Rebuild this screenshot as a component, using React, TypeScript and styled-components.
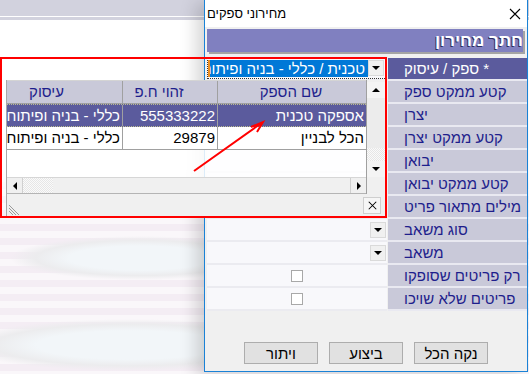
import React from 'react';
import styled, { createGlobalStyle } from 'styled-components';

const FONT = `"Liberation Sans", "DejaVu Sans", sans-serif`;

const GlobalStyle = createGlobalStyle`
  html, body {
    margin: 0;
    padding: 0;
  }
  body {
    width: 529px;
    height: 374px;
    overflow: hidden;
    font-family: ${FONT};
  }
`;

const Desktop = styled.div`
  position: relative;
  width: 529px;
  height: 374px;
  overflow: hidden;
  background:
    linear-gradient(to bottom, #d2d2de 0 16px, #fff 16px 17px, #d2d2de 17px 20px, transparent 20px),
    linear-gradient(to bottom, #fff 0 170px, rgba(255, 255, 255, 0) 222px),
    radial-gradient(ellipse 130px 22px at 140px 258px, #f2f6f9 55%, #ececee 80%, rgba(236, 236, 238, 0) 100%),
    radial-gradient(ellipse 170px 26px at 130px 345px, #f2f6f9 55%, #ececee 80%, rgba(236, 236, 238, 0) 100%),
    repeating-linear-gradient(to bottom, #f4edf4 0 7px, #faf7fa 7px 14px);
`;

/* ---------- dialog window ---------- */

const Dialog = styled.div`
  position: absolute;
  left: 204px;
  top: -1px;
  width: 324px;
  height: 373px;
  box-sizing: border-box;
  border: 1px solid #1a82d6;
  background: #f0f0f0;
  box-shadow: -8px 4px 16px rgba(0, 0, 0, 0.16);
  display: flex;
  flex-direction: column;
  z-index: 1;
`;

const TitleBar = styled.div`
  height: 27px;
  flex-shrink: 0;
  background: #fff;
  display: flex;
  align-items: center;
  justify-content: space-between;
  padding: 0 6px 0 2px;
`;

const TitleText = styled.span`
  direction: rtl;
  font-size: 13px;
  color: #000;
`;

const Body = styled.div`
  flex: 1;
  display: flex;
  flex-direction: column;
  padding: 2px 0 0 2px;
`;

const SectionBar = styled.div`
  width: 316px;
  height: 23px;
  flex-shrink: 0;
  background: #8080c0;
  box-shadow: 2px 2px 0 #a4a4a4;
  direction: rtl;
  text-align: right;
  overflow: hidden;
  white-space: nowrap;
  font-size: 17px;
  font-weight: bold;
  line-height: 23px;
  color: #fff;
  text-shadow: -1px 1px 0 #2c2c60;
`;

const Form = styled.div`
  margin-top: 6px;
  display: flex;
  flex-direction: column;
`;

const FormRow = styled.div`
  display: grid;
  grid-template-columns: 180px 139px;
  column-gap: 1px;
  height: 23px;
`;

const InputCell = styled.div<{ $align?: string }>`
  box-sizing: border-box;
  background: #f8f8fb;
  border-bottom: 2px solid #ebebf0;
  display: flex;
  align-items: center;
  justify-content: ${(p) => p.$align || 'flex-end'};
`;

const LabelCell = styled.div<{ $active?: boolean }>`
  box-sizing: border-box;
  background: ${(p) => (p.$active ? '#5b5b9d' : '#c9c9d9')};
  color: ${(p) => (p.$active ? '#fff' : '#1e1e8c')};
  border-bottom: 2px solid #e9e9f1;
  direction: rtl;
  text-align: left;
  padding-left: 16px;
  font-size: 15px;
  line-height: 21px;
  white-space: nowrap;
  overflow: hidden;
`;

const ComboFocus = styled.div`
  box-sizing: border-box;
  width: 100%;
  height: 21px;
  border: 1px dotted #333;
  display: flex;
  align-items: stretch;
  padding: 1px 1px 1px 0;
`;

const ComboSelection = styled.div`
  flex: 1;
  min-width: 0;
  background: #0078d7;
  color: #fff;
  border-left: 2px solid #f09020;
  direction: rtl;
  text-align: right;
  white-space: nowrap;
  overflow: hidden;
  font-size: 15px;
  line-height: 17px;
  padding-right: 3px;
`;

const DropButton = styled.div`
  width: 16px;
  height: 16px;
  flex-shrink: 0;
  box-sizing: border-box;
  background: #f0f0f0;
  border: 1px solid #dadada;
  display: flex;
  align-items: center;
  justify-content: center;
  margin-right: 1px;
`;

const Triangle = styled.span<{ $dir: 'up' | 'down' | 'left' | 'right' }>`
  width: 0;
  height: 0;
  border-style: solid;
  ${(p) =>
    p.$dir === 'down'
      ? 'border-width: 4px 4px 0 4px; border-color: #000 transparent transparent transparent;'
      : p.$dir === 'up'
      ? 'border-width: 0 4px 4px 4px; border-color: transparent transparent #000 transparent;'
      : p.$dir === 'left'
      ? 'border-width: 4px 4px 4px 0; border-color: transparent #000 transparent transparent;'
      : 'border-width: 4px 0 4px 4px; border-color: transparent transparent transparent #000;'}
`;

const CheckBox = styled.span`
  width: 12px;
  height: 12px;
  box-sizing: border-box;
  background: #fff;
  border: 1px solid #a8a8a8;
`;

const Footer = styled.div`
  flex: 1;
  display: flex;
  direction: rtl;
  justify-content: center;
  align-items: flex-start;
  gap: 11px;
  padding-top: 31px;
  padding-right: 2px;
`;

const PushButton = styled.button`
  width: 74px;
  height: 22px;
  box-sizing: border-box;
  background: #e1e1e1;
  border: 1px solid #adadad;
  font-family: ${FONT};
  font-size: 15px;
  color: #000;
  padding: 0;
  direction: rtl;
`;

/* ---------- popup grid (outlined in red) ---------- */

const Popup = styled.div`
  position: absolute;
  left: 0;
  top: 57px;
  width: 387px;
  height: 161px;
  box-sizing: border-box;
  border: 2px solid #ff0000;
  display: flex;
  flex-direction: column;
  z-index: 2;
`;

const PopupGap = styled.div`
  height: 21px;
  flex-shrink: 0;
`;

const Panel = styled.div`
  flex: 1;
  margin-left: 4px;
  border-left: 1px solid #a8a8a8;
  display: flex;
  flex-direction: column;
  font-size: 15px;
`;

const GridArea = styled.div`
  height: 114px;
  display: flex;
`;

const GridBody = styled.div`
  width: 360px;
  box-sizing: border-box;
  border-right: 1px solid #a0a0a0;
  display: flex;
  flex-direction: column;
  overflow: hidden;
`;

const GridRow = styled.div<{ $kind: 'head' | 'selected' | 'plain' }>`
  display: flex;
  direction: rtl;
  flex-shrink: 0;
  box-sizing: border-box;
  height: ${(p) => (p.$kind === 'head' ? 24 : 23)}px;
  background: ${(p) => (p.$kind === 'head' ? '#c9c9d9' : p.$kind === 'selected' ? '#5b5b9d' : '#fff')};
  color: ${(p) => (p.$kind === 'head' ? '#1e1e8c' : p.$kind === 'selected' ? '#fff' : '#000')};
  border-top: ${(p) => (p.$kind === 'head' ? '1px solid #d4d4d4' : p.$kind === 'selected' ? '1px dotted #bcbc90' : 'none')};
  border-bottom: ${(p) => (p.$kind === 'selected' ? '1px dotted #bcbc90' : '1px solid #a0a0a0')};
  line-height: 21px;
`;

const GridCell = styled.div<{ $w: number; $center?: boolean; $shift?: number }>`
  width: ${(p) => p.$w}px;
  flex-shrink: 0;
  box-sizing: border-box;
  border-left: 1px solid #a0a0a0;
  text-align: ${(p) => (p.$center ? 'center' : 'right')};
  padding-right: ${(p) => p.$shift ?? 2}px;
  white-space: nowrap;
  overflow: hidden;
`;

const GridEmpty = styled.div`
  flex: 1;
  background: rgba(255, 255, 255, 0.85);
`;

const HScroll = styled.div`
  height: 17px;
  flex-shrink: 0;
  box-sizing: border-box;
  display: flex;
  background: #f0f0f0;
  border-top: 1px solid #d6d6d6;
  border-bottom: 1px solid #b4b4b4;
`;

const ScrollButton = styled.div<{ $edge?: 'left' | 'right' }>`
  width: 16px;
  flex-shrink: 0;
  box-sizing: border-box;
  background: #f0f0f0;
  display: flex;
  align-items: center;
  justify-content: center;
  ${(p) => (p.$edge === 'left' ? 'border-right: 1px solid #d0d0d0;' : '')}
  ${(p) => (p.$edge === 'right' ? 'border-left: 1px solid #d0d0d0;' : '')}
`;

const Checker = styled.div<{ $size?: number }>`
  ${(p) => (p.$size ? `width: ${p.$size}px; flex-shrink: 0;` : 'flex: 1;')}
  background: repeating-conic-gradient(#e6e6e6 0 25%, #fafafa 0 50%) 0 0 / 2px 2px;
`;

const Filler = styled.div`
  flex: 1;
`;

const VScroll = styled.div`
  width: 18px;
  flex-shrink: 0;
  display: flex;
  flex-direction: column;
  background: #f0f0f0;
  padding-top: 2px;
`;

const VButton = styled.div`
  height: 16px;
  flex-shrink: 0;
  background: #f4f4f4;
  display: flex;
  align-items: center;
  justify-content: center;
`;

const VThumb = styled.div`
  height: 50px;
  flex-shrink: 0;
  background: #ececec;
`;

const Corner = styled.div`
  height: 17px;
  flex-shrink: 0;
  background: #f0f0f0;
`;

const BottomStrip = styled.div`
  flex: 1;
  background: #f0f0f0;
  display: flex;
  justify-content: space-between;
  align-items: center;
  padding: 0 4px 0 1px;
`;

const Grip = styled.svg`
  align-self: flex-end;
`;

const CloseBox = styled.div`
  width: 18px;
  height: 17px;
  box-sizing: border-box;
  background: #f6f6f6;
  border: 1px solid #cfcfcf;
  display: flex;
  align-items: center;
  justify-content: center;
`;

const Annotation = styled.svg`
  position: absolute;
  left: 0;
  top: 0;
  z-index: 3;
  pointer-events: none;
`;

type Field = { label: string; kind?: 'combo' | 'drop' | 'check'; active?: boolean };

const fields: Field[] = [
  { label: '* ספק / עיסוק', kind: 'combo', active: true },
  { label: 'קטע ממקט ספק' },
  { label: 'יצרן' },
  { label: 'קטע ממקט יצרן' },
  { label: 'יבואן' },
  { label: 'קטע ממקט יבואן' },
  { label: 'מילים מתאור פריט' },
  { label: 'סוג משאב', kind: 'drop' },
  { label: 'משאב', kind: 'drop' },
  { label: 'רק פריטים שסופקו', kind: 'check' },
  { label: 'פריטים שלא שויכו', kind: 'check' },
];

const suppliers = [
  { name: 'אספקה טכנית', id: '555333222', biz: 'כללי - בניה ופיתוח' },
  { name: 'הכל לבניין', id: '29879', biz: 'כללי - בניה ופיתוח' },
];

const CloseIcon = ({ size, width }: { size: number; width: number }) => (
  <svg width={size} height={size} viewBox="0 0 12 12">
    <path d="M1 1 L11 11 M11 1 L1 11" stroke="#000" strokeWidth={width} fill="none" />
  </svg>
);

const renderInput = (f: Field) => {
  if (f.kind === 'combo') {
    return (
      <InputCell>
        <ComboFocus>
          <ComboSelection>טכנית / כללי - בניה ופיתוח</ComboSelection>
          <DropButton>
            <Triangle $dir="down" />
          </DropButton>
        </ComboFocus>
      </InputCell>
    );
  }
  if (f.kind === 'drop') {
    return (
      <InputCell>
        <DropButton>
          <Triangle $dir="down" />
        </DropButton>
      </InputCell>
    );
  }
  if (f.kind === 'check') {
    return (
      <InputCell $align="center">
        <CheckBox />
      </InputCell>
    );
  }
  return <InputCell />;
};

const App: React.FC = () => {
  return (
    <Desktop>
      <GlobalStyle />

      <Dialog>
        <TitleBar>
          <TitleText>מחירוני ספקים</TitleText>
          <CloseIcon size={12} width={1.1} />
        </TitleBar>
        <Body>
          <SectionBar>חתך מחירון</SectionBar>
          <Form>
            {fields.map((f) => (
              <FormRow key={f.label}>
                {renderInput(f)}
                <LabelCell $active={f.active}>{f.label}</LabelCell>
              </FormRow>
            ))}
          </Form>
          <Footer>
            <PushButton>נקה הכל</PushButton>
            <PushButton>ביצוע</PushButton>
            <PushButton>ויתור</PushButton>
          </Footer>
        </Body>
      </Dialog>

      <Popup>
        <PopupGap />
        <Panel>
          <GridArea>
            <GridBody>
              <GridRow $kind="head">
                <GridCell $w={149} $center>שם הספק</GridCell>
                <GridCell $w={95} $center $shift={22}>זהוי ח.פ</GridCell>
                <GridCell $w={150} $center>עיסוק</GridCell>
              </GridRow>
              {suppliers.map((s, i) => (
                <GridRow key={s.id} $kind={i === 0 ? 'selected' : 'plain'}>
                  <GridCell $w={149}>{s.name}</GridCell>
                  <GridCell $w={95}>{s.id}</GridCell>
                  <GridCell $w={150}>{s.biz}</GridCell>
                </GridRow>
              ))}
              <GridEmpty />
              <HScroll>
                <ScrollButton $edge="left">
                  <Triangle $dir="left" />
                </ScrollButton>
                <Checker $size={30} />
                <Filler />
                <ScrollButton $edge="right">
                  <Triangle $dir="right" />
                </ScrollButton>
              </HScroll>
            </GridBody>
            <VScroll>
              <VButton>
                <Triangle $dir="up" />
              </VButton>
              <VThumb />
              <Checker />
              <VButton>
                <Triangle $dir="down" />
              </VButton>
              <Corner />
            </VScroll>
          </GridArea>
          <BottomStrip>
            <Grip width="13" height="13" viewBox="0 0 13 13">
              <path d="M1 5 L8 12 M1 8 L5 12 M1 2 L11 12" stroke="#9a9a9a" strokeWidth="1" />
            </Grip>
            <CloseBox>
              <CloseIcon size={9} width={1.4} />
            </CloseBox>
          </BottomStrip>
        </Panel>
      </Popup>

      <Annotation width="529" height="374" viewBox="0 0 529 374">
        <path d="M194 171 L263 122 M251 127 L263 122 L257 132" stroke="#f00" strokeWidth="2" fill="none" />
      </Annotation>
    </Desktop>
  );
};

export default App;
